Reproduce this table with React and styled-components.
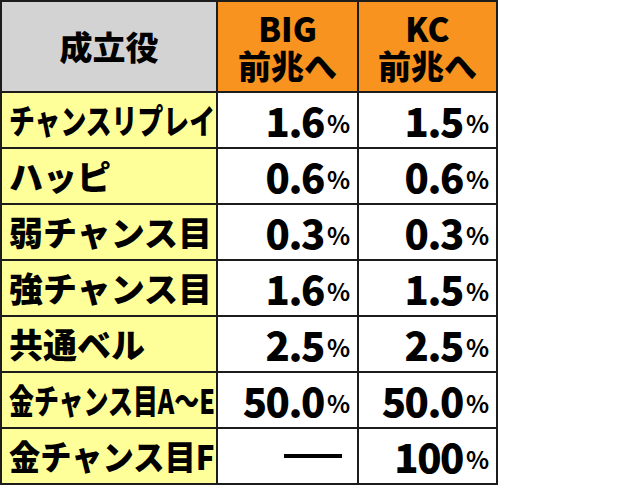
import React, { useLayoutEffect, useRef, useState } from "react";
import styled, { createGlobalStyle } from "styled-components";

const Global = createGlobalStyle`
  html, body { margin: 0; padding: 0; background: #ffffff; }
  body { font-family: "Noto Sans CJK JP", "Noto Sans", sans-serif; }
`;

const Table = styled.div`
  display: grid;
  grid-template-columns: 214px 139px 137px;
  grid-template-rows: 89px repeat(7, 54px);
  gap: 2px;
  padding: 2px;
  width: max-content;
  background: #1c1c1c;
`;

const HeadCell = styled.div`
  background: ${(p) => (p.$tone === "gray" ? "#d3d3d3" : "#f7931e")};
  display: flex;
  flex-direction: column;
  align-items: center;
  justify-content: center;
  font-weight: 900;
  font-size: 33px;
  line-height: 37px;
  color: #000;
`;

const LabelCell = styled.div`
  background: #ffff99;
  display: flex;
  align-items: center;
  padding-left: 7px;
  overflow: hidden;
`;

const LabelText = styled.span`
  display: inline-block;
  white-space: nowrap;
  font-weight: 900;
  font-size: 34px;
  line-height: 1;
  color: #000;
  transform-origin: left center;
`;

const ValueCell = styled.div`
  background: #ffffff;
  display: flex;
  align-items: center;
  justify-content: flex-end;
  padding-right: 7px;
  color: #000;
`;

const Num = styled.span`
  font-weight: 900;
  font-size: 40px;
  line-height: 1;
  letter-spacing: -1.5px;
`;

const Pct = styled.span`
  font-weight: 700;
  font-size: 24px;
  line-height: 1;
  margin-left: 3px;
  padding-top: 6px;
`;

const Dash = styled.span`
  display: block;
  width: 58px;
  height: 4px;
  background: #000;
  margin-right: 8px;
`;

function FitLabel({ children, max = 206 }) {
  const ref = useRef(null);
  const [scale, setScale] = useState(1);
  useLayoutEffect(() => {
    if (ref.current) {
      const w = ref.current.scrollWidth;
      setScale(w > max ? max / w : 1);
    }
  }, [max]);
  return (
    <LabelText ref={ref} style={{ transform: `scaleX(${scale})` }}>
      {children}
    </LabelText>
  );
}

const rows = [
  ["チャンスリプレイ", "1.6", "1.5"],
  ["ハッピ", "0.6", "0.6"],
  ["弱チャンス目", "0.3", "0.3"],
  ["強チャンス目", "1.6", "1.5"],
  ["共通ベル", "2.5", "2.5"],
  ["金チャンス目A～E", "50.0", "50.0"],
  ["金チャンス目F", null, "100"],
];

function Value({ v }) {
  if (v === null) {
    return (
      <ValueCell>
        <Dash />
      </ValueCell>
    );
  }
  return (
    <ValueCell>
      <Num>{v}</Num>
      <Pct>%</Pct>
    </ValueCell>
  );
}

export default function App() {
  return (
    <>
      <Global />
      <Table>
        <HeadCell $tone="gray">成立役</HeadCell>
        <HeadCell>
          <span>BIG</span>
          <span>前兆へ</span>
        </HeadCell>
        <HeadCell>
          <span>KC</span>
          <span>前兆へ</span>
        </HeadCell>
        {rows.map(([label, a, b]) => (
          <React.Fragment key={label}>
            <LabelCell>
              <FitLabel>{label}</FitLabel>
            </LabelCell>
            <Value v={a} />
            <Value v={b} />
          </React.Fragment>
        ))}
      </Table>
    </>
  );
}
